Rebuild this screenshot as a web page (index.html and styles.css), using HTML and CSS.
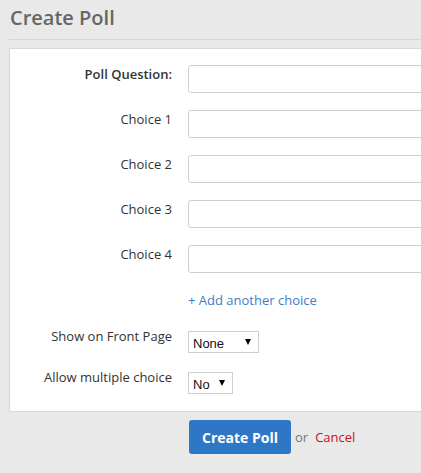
FILE: index.html
```html
<!DOCTYPE html>
<html>
<head>
<meta charset="utf-8">
<link rel="stylesheet" href="styles.css">
</head>
<body>
<div class="page">
  <h1 class="title">Create Poll</h1>
  <form class="panel">
    <div class="row">
      <label class="label label-strong">Poll Question:</label>
      <input class="field" type="text">
    </div>
    <div class="row">
      <label class="label">Choice 1</label>
      <input class="field" type="text">
    </div>
    <div class="row">
      <label class="label">Choice 2</label>
      <input class="field" type="text">
    </div>
    <div class="row">
      <label class="label">Choice 3</label>
      <input class="field" type="text">
    </div>
    <div class="row">
      <label class="label">Choice 4</label>
      <input class="field" type="text">
    </div>
    <div class="row row-add">
      <span class="label"></span>
      <a class="add-link" href="#">+ Add another choice</a>
    </div>
    <div class="row row-select">
      <label class="label">Show on Front Page</label>
      <div class="select select-wide"><span class="select-value">None</span><span class="caret"></span></div>
    </div>
    <div class="row row-select row-last">
      <label class="label">Allow multiple choice</label>
      <div class="select"><span class="select-value">No</span><span class="caret"></span></div>
    </div>
  </form>
  <div class="actions">
    <button class="btn" type="button">Create Poll</button>
    <span class="or">or</span>
    <a class="cancel" href="#">Cancel</a>
  </div>
</div>
</body>
</html>
```
FILE: styles.css
```css
html, body {
  margin: 0;
  padding: 0;
  overflow: hidden;
}
body {
  background: #e9e9e9;
  font-family: "Open Sans", "Liberation Sans", sans-serif;
  font-size: 13px;
  color: #333;
}
.page {
  padding-left: 9px;
  width: 900px;
}
.title {
  margin: 0;
  padding: 4px 0 8px 1px;
  font-size: 20px;
  line-height: 27px;
  font-weight: 600;
  color: #666;
  border-bottom: 1px solid #d6d6d6;
}
.panel {
  margin: 8px 0 0 0;
  background: #fff;
  border: 1px solid #d8d8d8;
  padding: 16px 0 17px 0;
  display: flex;
  flex-direction: column;
}
.row {
  display: flex;
  align-items: flex-start;
  gap: 16px;
  margin-bottom: 17px;
}
.label {
  width: 162px;
  flex: none;
  text-align: right;
  line-height: 18px;
  color: #333;
}
.label-strong {
  font-weight: 600;
}
.field {
  box-sizing: border-box;
  width: 500px;
  height: 28px;
  margin: 0;
  border: 1px solid #cfcfcf;
  border-radius: 3px;
  background: #fff;
  font: inherit;
  padding: 0 6px;
}
.row-add {
  margin-top: 1px;
  margin-bottom: 18px;
}
.add-link {
  line-height: 18px;
  color: #3b7dca;
  text-decoration: none;
}
.row-select {
  margin-bottom: 15px;
}
.row-last {
  margin-bottom: 0;
}
.select {
  box-sizing: border-box;
  margin-top: 4px;
  height: 22px;
  width: 45px;
  border: 1px solid #cfcfcf;
  background: #fff;
  display: flex;
  align-items: center;
  justify-content: space-between;
  padding: 0 7px 0 4px;
  font-family: "Liberation Sans", Arial, sans-serif;
  font-size: 13px;
  color: #111;
}
.select-wide {
  width: 71px;
}
.select-value {
  padding-top: 2px;
}
.caret {
  width: 0;
  height: 0;
  border-left: 3px solid transparent;
  border-right: 3px solid transparent;
  border-top: 6px solid #000;
}
.actions {
  display: flex;
  align-items: center;
  padding: 8px 0 0 180px;
}
.btn {
  height: 34px;
  padding: 0 13px;
  border: none;
  border-radius: 3px;
  background: #2d77c6;
  color: #fff;
  font-family: "Open Sans", "Liberation Sans", sans-serif;
  font-size: 14px;
  font-weight: 700;
}
.or {
  margin-left: 4px;
  color: #777;
}
.cancel {
  margin-left: 7px;
  color: #c4101c;
  text-decoration: none;
}
```
